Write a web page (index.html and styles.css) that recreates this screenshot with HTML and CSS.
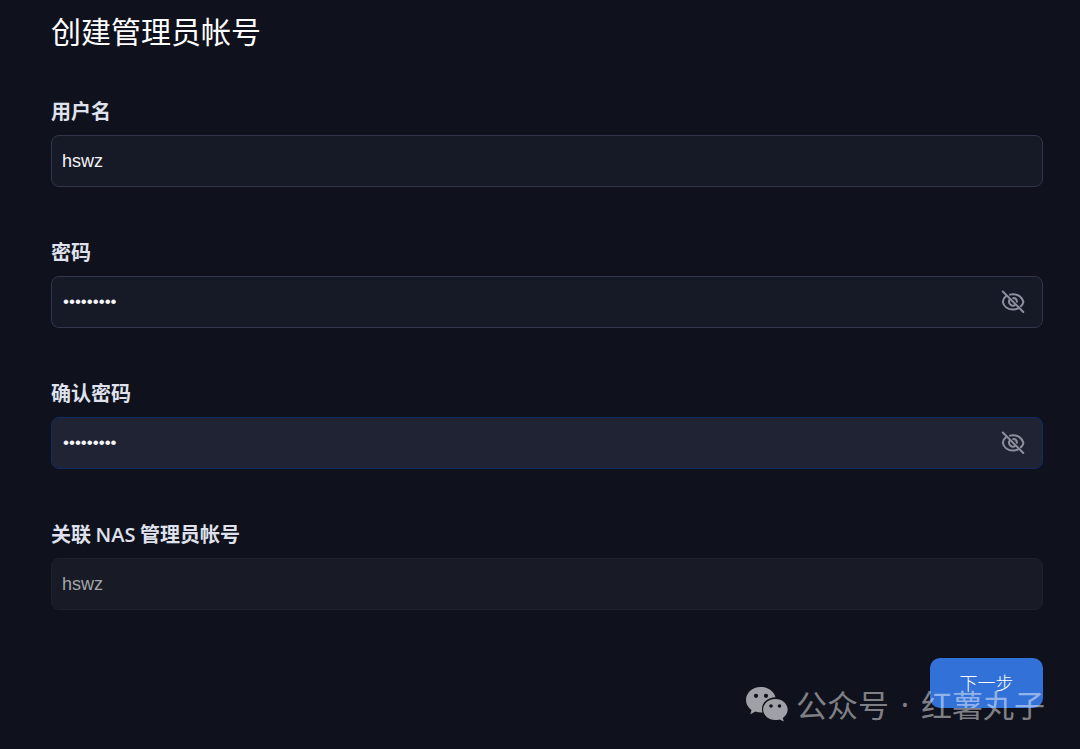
FILE: index.html
```html
<!DOCTYPE html>
<html lang="zh-CN">
<head>
<meta charset="utf-8">
<meta name="viewport" content="width=device-width, initial-scale=1">
<title>创建管理员帐号</title>
<link rel="stylesheet" href="styles.css">
</head>
<body>
<main class="page">
  <h1 class="title">创建管理员帐号</h1>
  <form class="form">
    <div class="fields">
      <div class="field">
        <label class="label" for="username">用户名</label>
        <input class="input" id="username" type="text" value="hswz">
      </div>
      <div class="field">
        <label class="label" for="password">密码</label>
        <div class="control">
          <input class="input" id="password" type="password" value="hswz12345">
          <button class="reveal" type="button" aria-label="显示密码">
            <svg viewBox="0 0 24 24" width="24" height="24" fill="none" stroke="currentColor" stroke-width="2" stroke-linecap="round"><path d="M5.4 5.800C3.400 7.300 2.100 9.600 1.800 11.800c.8 4.600 5.200 7.800 10.200 7.800 2 0 3.900-.5 5.500-1.400"/><path d="M9 4.600c1-.3 2-.4 3-.4 5 0 9.500 3.200 10.400 7.600-.3 1.700-1.200 3.200-2.600 4.500"/><path d="M8.900 9.200a4 4 0 0 0 5.600 5.600"/><path d="M12.300 8.100a3.900 3.900 0 0 1 3.700 3.700"/><path d="M1.800 1.500 22.300 22"/></svg>
          </button>
        </div>
      </div>
      <div class="field">
        <label class="label" for="confirm">确认密码</label>
        <div class="control">
          <input class="input input-active" id="confirm" type="password" value="hswz12345">
          <button class="reveal" type="button" aria-label="显示确认密码">
            <svg viewBox="0 0 24 24" width="24" height="24" fill="none" stroke="currentColor" stroke-width="2" stroke-linecap="round"><path d="M5.4 5.800C3.400 7.300 2.100 9.600 1.800 11.800c.8 4.600 5.200 7.800 10.200 7.800 2 0 3.900-.5 5.500-1.400"/><path d="M9 4.600c1-.3 2-.4 3-.4 5 0 9.500 3.200 10.400 7.600-.3 1.700-1.200 3.200-2.600 4.500"/><path d="M8.900 9.200a4 4 0 0 0 5.600 5.600"/><path d="M12.300 8.100a3.900 3.900 0 0 1 3.700 3.700"/><path d="M1.800 1.500 22.300 22"/></svg>
          </button>
        </div>
      </div>
      <div class="field">
        <label class="label" for="nas">关联 <span class="latin">NAS</span> 管理员帐号</label>
        <input class="input" id="nas" type="text" value="hswz" disabled>
      </div>
    </div>
    <div class="actions">
      <button class="next" type="submit">下一步</button>
      <div class="watermark">
        <svg class="wechat" viewBox="0 0 44 36" width="44" height="36" aria-hidden="true">
          <path fill="#a0a1a6" fill-rule="evenodd" d="M15.500 1C7.300 1 1 6.800 1 14c0 4.100 2 7.500 5.500 10L5.300 28.200l5.200-2.600c2.200.8 4.600 1.100 7 .9A11.500 11.500 0 0 1 17 23c0-6.600 6-11.700 13.500-11.700C29 5.200 23 1 15.500 1zM11 7.700a2.100 2.100 0 1 1 0 4.200 2.100 2.100 0 0 1 0-4.200zm10 0a2.100 2.100 0 1 1 0 4.200 2.100 2.100 0 0 1 0-4.200z"/>
          <path fill="#a0a1a6" fill-rule="evenodd" d="M30.400 13c-6.800 0-12.300 4.700-12.300 10.500S23.600 34 30.400 34c1.500 0 2.900-.2 4.200-.6l4.200 2-1-3.500c3-1.900 4.900-4.900 4.900-8.400C42.700 17.700 37.200 13 30.400 13zM26 18.200a1.800 1.800 0 1 1 0 3.600 1.800 1.800 0 0 1 0-3.600zm8.500 0a1.800 1.800 0 1 1 0 3.600 1.800 1.800 0 0 1 0-3.600z"/>
        </svg>
        <span class="source">公众号</span>
        <span class="dot">·</span>
        <span class="author">红薯丸子</span>
      </div>
    </div>
  </form>
</main>
</body>
</html>
```
FILE: styles.css
```css
* {
  box-sizing: border-box;
}

body {
  margin: 0;
  background: #0f111c;
  color: #fff;
  font-family: "Noto Sans CJK SC", sans-serif;
}

.page {
  padding: 10px 37px 36px 51px;
}

.title {
  margin: 0 0 47px;
  font-size: 30px;
  line-height: 40px;
  font-weight: 400;
}

.form {
  display: flex;
  flex-direction: column;
  gap: 48px;
}

.fields {
  display: flex;
  flex-direction: column;
  gap: 51px;
}

.field {
  display: flex;
  flex-direction: column;
  gap: 10px;
}

.label {
  font-size: 20px;
  line-height: 28px;
  font-weight: 700;
  color: #dfe1ec;
}

.latin {
  font-family: "Open Sans", sans-serif;
  font-weight: 600;
  line-height: 20px;
}

.control {
  position: relative;
}

.input {
  display: block;
  width: 100%;
  height: 52px;
  padding: 0 10px;
  border: 1px solid #32364a;
  border-radius: 8px;
  outline: none;
  background: #161926;
  color: #f4f4f6;
  font-family: "Liberation Sans", sans-serif;
  font-size: 18px;
}

.input[type="password"] {
  padding: 0 56px 0 11px;
  font-size: 17px;
}

.input-active {
  border-color: #0e2b62;
  background: #202333;
}

.input:disabled {
  border-color: #1e202c;
  background: #181a25;
  color: #a4a5aa;
}

.reveal {
  position: absolute;
  top: 14px;
  right: 18px;
  width: 24px;
  height: 24px;
  padding: 0;
  border: 0;
  background: none;
  color: #8d8f9e;
}

.reveal svg {
  display: block;
}

.actions {
  position: relative;
  display: flex;
  justify-content: flex-end;
}

.next {
  width: 113px;
  height: 50px;
  padding: 0 0 2px;
  border: 0;
  border-radius: 10px;
  background: #3271d8;
  color: #fff;
  font-family: "Noto Sans CJK SC", sans-serif;
  font-size: 18px;
  font-weight: 300;
}

.watermark {
  position: absolute;
  top: 24px;
  right: -2px;
  display: flex;
  align-items: center;
  height: 44px;
  color: rgba(255, 255, 255, 0.48);
  font-size: 31px;
  line-height: 44px;
  font-weight: 400;
  white-space: nowrap;
  pointer-events: none;
}

.wechat {
  margin-right: 7px;
}

.dot {
  width: 32px;
  font-family: "Noto Sans", sans-serif;
  text-align: center;
}
```
